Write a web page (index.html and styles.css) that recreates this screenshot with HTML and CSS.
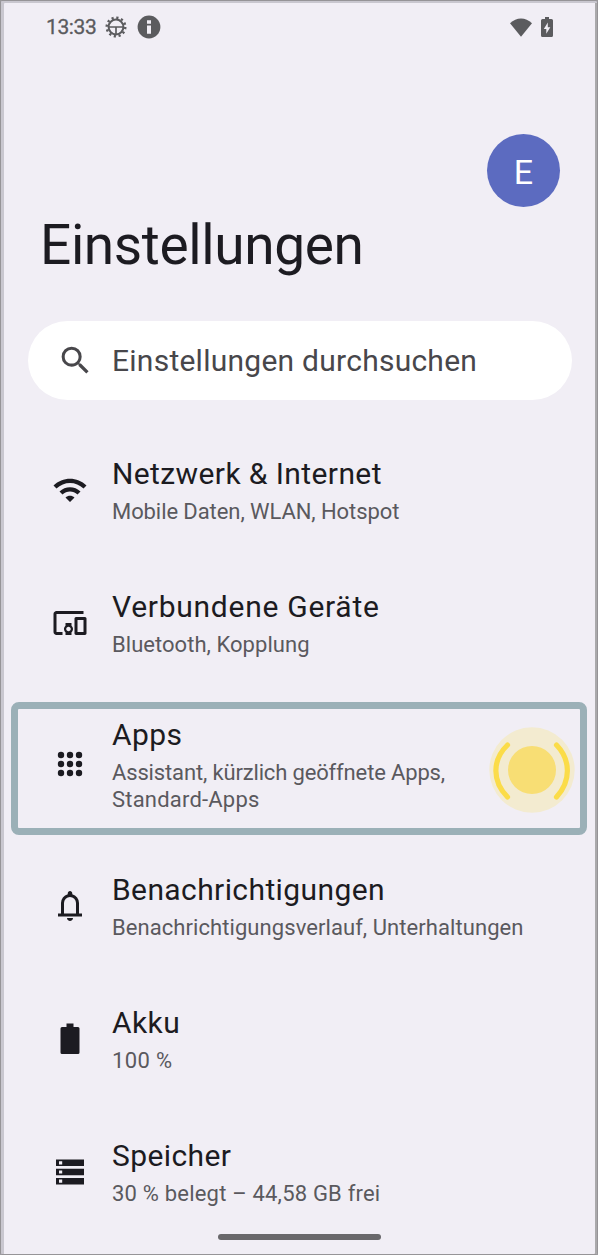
FILE: index.html
```html
<!DOCTYPE html>
<html lang="de">
<head>
<meta charset="utf-8">
<title>Einstellungen</title>
<link rel="stylesheet" href="styles.css">
</head>
<body>
<main class="phone">
  <header class="status">
    <span class="time">13:33</span>
    <svg class="gear" viewBox="0 0 22 22"><circle cx="11" cy="11" r="9.3" class="teeth"/><circle cx="11" cy="11" r="7.4" class="line"/><path class="spokes" d="M3.5 11h15M11 11v7.5"/></svg>
    <svg class="info" viewBox="0 0 24 24"><circle cx="12" cy="12" r="11.4"/><path class="cut" d="M10 5.2h4v3.600h-4zM10 10.400h4v8.400h-4z"/></svg>
    <svg class="signal" viewBox="0 0 22 19"><path d="M11 18.800L0 5.200Q5 .5 11 .5t11 4.700z"/></svg>
    <svg class="charge" viewBox="0 0 12 20"><path d="M4 0h4v2h2.500Q12 2 12 3.500v15q0 1.500-1.500 1.500h-9Q0 20 0 18.500v-15Q0 2 1.500 2H4z"/><path class="cut" d="M6.800 5.500L2.800 12h2.500v4.800l4-6.600H6.800z"/></svg>
  </header>
  <div class="account"><span class="avatar">E</span></div>
  <h1 class="heading">Einstellungen</h1>
  <div class="search">
    <svg class="search-icon" viewBox="0 0 24 24"><path d="M15.500 14h-.79l-.28-.27A6.470 6.470 0 0 0 16 9.500 6.500 6.500 0 1 0 9.500 16c1.610 0 3.090-.59 4.230-1.570l.27.28v.79l5 4.990L20.490 19zm-6 0C7.010 14 5 11.990 5 9.500S7.010 5 9.500 5 14 7.010 14 9.500 11.990 14 9.500 14z"/></svg>
    <span class="search-text">Einstellungen durchsuchen</span>
  </div>
  <section class="list">
    <div class="row row-network">
      <svg class="icon" viewBox="0 0 24 24"><path d="M1 9l2 2c4.970-4.970 13.030-4.970 18 0l2-2C16.930 2.930 7.080 2.930 1 9zm8 8l3 3 3-3c-1.650-1.660-4.340-1.660-6 0zm-4-4l2 2c2.760-2.760 7.240-2.760 10 0l2-2C15.140 9.140 8.870 9.140 5 13z"/></svg>
      <div class="text"><div class="title">Netzwerk &amp; Internet</div><div class="sub">Mobile Daten, WLAN, Hotspot</div></div>
    </div>
    <div class="row row-devices">
      <svg class="icon" viewBox="0 0 24 24"><path d="M3 6h18V4H3c-1.100 0-2 .9-2 2v12c0 1.100.9 2 2 2h4v-2H3V6zm10 6H9v1.780c-.61.55-1 1.330-1 2.220s.39 1.670 1 2.220V20h4v-1.780c.61-.55 1-1.340 1-2.220s-.39-1.670-1-2.220V12zm-2 5.500c-.83 0-1.500-.67-1.500-1.500s.67-1.500 1.500-1.500 1.500.67 1.500 1.500-.67 1.500-1.500 1.500zM22 8h-6c-.5 0-1 .5-1 1v10c0 .5.5 1 1 1h6c.5 0 1-.5 1-1V9c0-.5-.5-1-1-1zm-1 10h-4v-8h4v8z"/></svg>
      <div class="text"><div class="title">Verbundene Geräte</div><div class="sub">Bluetooth, Kopplung</div></div>
    </div>
    <div class="row row-apps">
      <svg class="icon" viewBox="0 0 36 36"><circle cx="9" cy="9" r="3.200"/><circle cx="18" cy="9" r="3.200"/><circle cx="27" cy="9" r="3.200"/><circle cx="9" cy="18" r="3.200"/><circle cx="18" cy="18" r="3.200"/><circle cx="27" cy="18" r="3.200"/><circle cx="9" cy="27" r="3.200"/><circle cx="18" cy="27" r="3.200"/><circle cx="27" cy="27" r="3.200"/></svg>
      <div class="text"><div class="title">Apps</div><div class="sub">Assistant, kürzlich geöffnete Apps,<br><span class="second-line">Standard-Apps</span></div></div>
      <div class="highlight"></div>
      <svg class="tap" viewBox="0 0 86 86"><circle cx="43" cy="43" r="42.700" fill="#f3ebd0"/><circle cx="43" cy="43" r="24" fill="#f8de74"/><path d="M18.500 18C3 33 3 54 18.500 70M67.500 18C82 33 82 54 67.500 70" fill="none" stroke="#fbdc48" stroke-width="5.200" stroke-linecap="round"/></svg>
    </div>
    <div class="row row-alerts">
      <svg class="icon" viewBox="0 0 24 24"><path d="M4 19v-2h2v-7q0-2.075 1.250-3.687T10.500 4.200v-.7q0-.625.438-1.062T12 2t1.063.438T13.500 3.500v.7q2 .5 3.250 2.113T18 10v7h2v2zm8 3q-.825 0-1.412-.587T10 20h4q0 .825-.587 1.413T12 22m-4-5h8v-7q0-1.650-1.175-2.825T12 6 9.175 7.175 8 10z"/></svg>
      <div class="text"><div class="title">Benachrichtigungen</div><div class="sub">Benachrichtigungsverlauf, Unterhaltungen</div></div>
    </div>
    <div class="row row-battery">
      <svg class="icon" viewBox="0 0 36 36"><path d="M14.500 2.500h7V6H26q1.500 0 1.500 1.500v24q0 1.500-1.500 1.500H10q-1.500 0-1.500-1.500v-24Q8.500 6 10 6h4.500z"/></svg>
      <div class="text"><div class="title">Akku</div><div class="sub">100 %</div></div>
    </div>
    <div class="row row-storage">
      <svg class="icon" viewBox="0 0 36 36"><path d="M4 5.500h28v6.600H4zM4 14.700h28v6.600H4zM4 23.900h28v6.600H4z"/><path class="hole" d="M7 7.200h3.200v3.200H7zM7 16.400h3.200v3.200H7zM7 25.600h3.200v3.200H7z"/></svg>
      <div class="text"><div class="title">Speicher</div><div class="sub">30 % belegt – 44,58 GB frei</div></div>
    </div>
  </section>
  <div class="home"></div>
</main>
</body>
</html>
```
FILE: styles.css
```css
* { box-sizing: border-box; }
body { margin: 0; background: #9b999c; font-family: Roboto, "Liberation Sans", sans-serif; }
.phone {
  width: 598px; height: 1255px; padding: 0 1px; overflow: hidden;
  display: flex; flex-direction: column;
  background: #f1eef5; border: 1px solid #969497;
  border-radius: 2px;
  box-shadow: inset 3px 2px 0 #c9c7cf, inset -2px 0 0 #aaa9ab;
}
.status {
  height: 52px; flex: none; display: flex; align-items: center;
  padding: 0 43px 0 44px; color: #5b5b5e; fill: #5b5b5e;
}
.time { width: 59px; font-size: 21px; letter-spacing: -.4px; white-space: nowrap; -webkit-text-stroke: .3px #5b5b5e; }
.gear { width: 22px; height: 22px; }
.teeth { fill: none; stroke: #5b5b5e; stroke-width: 2.4; stroke-dasharray: 2.2 2.67; }
.line { fill: none; stroke: #5b5b5e; stroke-width: 2; }
.spokes { fill: none; stroke: #5b5b5e; stroke-width: 1.7; }
.info { width: 24px; height: 24px; margin-left: 10px; }
.cut { fill: #f1eef5; }
.signal { width: 22px; height: 19px; margin-left: auto; }
.charge { width: 12px; height: 20px; margin-left: 9px; }
.account { display: flex; justify-content: flex-end; padding: 81px 36px 0 0; }
.avatar {
  width: 73px; height: 73px; border-radius: 50%; background: #5c6bc0; color: #fff;
  display: flex; align-items: center; justify-content: center; font-size: 34px; padding-top: 2px;
}
.heading {
  margin: 3px 0 0 38px; height: 70px; line-height: 70px; font-size: 55px; font-weight: 400;
  letter-spacing: -.38px; color: #1c1b21; white-space: nowrap;
}
.search {
  width: 544px; height: 79px; margin: 41px 0 0 26px; flex: none; border-radius: 40px; background: #fff;
  display: flex; align-items: center; padding-left: 29px;
}
.search-icon { width: 37px; height: 37px; fill: #48474b; flex: none; }
.search-text { margin-left: 18px; font-size: 30px; letter-spacing: .25px; color: #48474b; white-space: nowrap; }
.list { margin-top: 23px; flex: none; }
.row { position: relative; height: 133px; display: flex; align-items: center; padding-left: 50px; }
.row-apps { height: 150px; }
.icon { width: 36px; height: 36px; flex: none; fill: #1c1b21; }
.hole { fill: #f1eef5; }
.text { margin-left: 24px; white-space: nowrap; }
.title { height: 38px; line-height: 38px; font-size: 30px; letter-spacing: .4px; color: #1c1b21; }
.sub { margin-top: 5px; line-height: 27px; font-size: 22px; color: #5a595e; }
.row-devices .title { letter-spacing: .73px; }
.row-network .sub { letter-spacing: -.08px; }
.row-devices .sub { letter-spacing: .04px; }
.row-apps .sub { letter-spacing: -.15px; }
.row-apps .second-line { letter-spacing: .2px; }
.row-alerts .sub { letter-spacing: .07px; }
.row-battery .sub { letter-spacing: .35px; }
.row-storage .sub { letter-spacing: .2px; }
.highlight {
  position: absolute; left: 9px; right: 9px; top: 13px; height: 133px;
  border: 7px solid #9bb0b7; border-radius: 8px;
}
.tap { position: absolute; left: 487px; top: 38px; width: 86px; height: 86px; }
.home { width: 163px; height: 6px; flex: none; margin: -4px 0 0 216px; border-radius: 3px; background: #69686b; }
```
